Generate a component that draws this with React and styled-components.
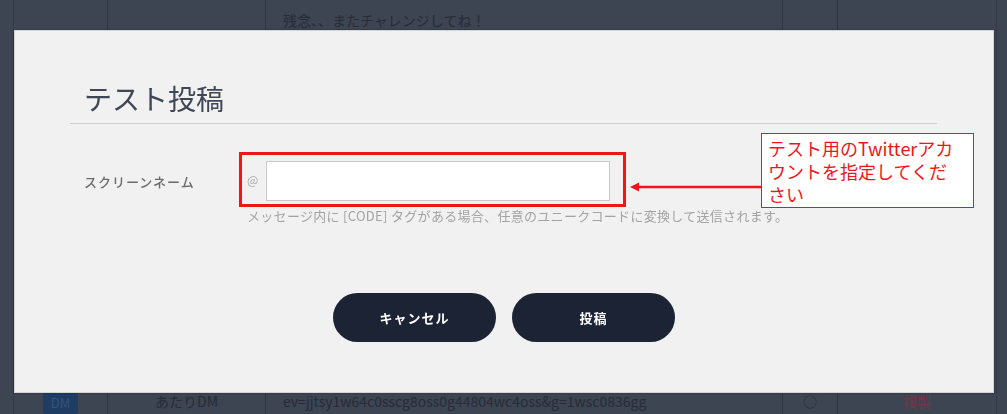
import React from "react";
import styled, { createGlobalStyle } from "styled-components";

const GlobalStyle = createGlobalStyle`
  html, body {
    margin: 0;
    padding: 0;
    background: #3d4452;
    font-family: "Noto Sans CJK JP", "Noto Sans", sans-serif;
    overflow: hidden;
  }
`;

const Page = styled.div`
  width: 1007px;
  height: 414px;
  overflow: hidden;
  background: #3d4452;
`;

const Table = styled.div`
  margin-left: 13px;
  width: 982px;
  border-left: 1px solid #343a46;
  border-right: 1px solid #343a46;
`;

const Row = styled.div`
  display: grid;
  grid-template-columns: 93px 158px 517px 55px 1fr;
  height: ${(p) => p.$h}px;
`;

const Cell = styled.div`
  border-left: ${(p) => (p.$first ? "none" : "1px solid #2f3541")};
  display: flex;
  align-items: ${(p) => p.$align || "center"};
  justify-content: ${(p) => p.$justify || "flex-start"};
  padding: ${(p) => p.$pad || "0"};
  color: #272c37;
  font-size: 14px;
  white-space: nowrap;
  overflow: hidden;
`;

const Badge = styled.span`
  background: #1f3c62;
  color: #34557c;
  font-size: 13px;
  padding: 2px 8px;
  border-radius: 3px;
`;

const CopyLink = styled.span`
  color: #6a3a47;
  font-size: 14px;
`;

const Modal = styled.div`
  position: fixed;
  left: 14px;
  top: 30px;
  width: 980px;
  height: 363px;
  box-sizing: border-box;
  background: #f1f1f1;
  border: 1px solid #d4d4d4;
  box-shadow: 0 0 2px rgba(0, 0, 0, 0.3);
`;

const Header = styled.div`
  margin: 50px 56px 0 55px;
  padding: 0 0 7px 14px;
  border-bottom: 1px solid #cdcdcd;
`;

const Title = styled.h2`
  margin: 0;
  font-size: 28px;
  line-height: 35px;
  font-weight: 400;
  color: #3f4656;
`;

const FormRow = styled.div`
  display: flex;
  align-items: center;
  margin: 37px 0 0 69px;
`;

const Label = styled.div`
  width: 163px;
  font-size: 13px;
  color: #6b6b6b;
  font-weight: 500;
  letter-spacing: 1px;
`;

const FieldGroup = styled.div`
  position: relative;
  display: flex;
  align-items: center;
  gap: 8px;

  &::after {
    content: "";
    position: absolute;
    top: -9px;
    left: -8px;
    right: -16px;
    bottom: -6px;
    border: 3px solid #f0141c;
    pointer-events: none;
  }
`;

const At = styled.span`
  font-size: 12px;
  color: #aaaaaa;
  margin-top: -4px;
`;

const Input = styled.input`
  width: 344px;
  height: 40px;
  box-sizing: border-box;
  border: 1px solid #c9c9c9;
  background: #fff;
  outline: none;
`;

const Help = styled.p`
  margin: 5px 0 0 232px;
  font-size: 13px;
  line-height: 19px;
  color: #a3a3a3;
  letter-spacing: 0.3px;
`;

const Actions = styled.div`
  display: flex;
  justify-content: center;
  gap: 16px;
  margin-top: 68px;
`;

const Button = styled.button`
  width: 163px;
  height: 49px;
  border: none;
  border-radius: 25px;
  background: #1c2334;
  color: #fff;
  font-family: inherit;
  font-size: 13px;
  font-weight: 700;
  letter-spacing: 1px;
`;

const Arrow = styled.svg`
  position: absolute;
  left: 614px;
  top: 150px;
`;

const CalloutFrame = styled.div`
  position: absolute;
  left: 746px;
  top: 102px;
  width: 213px;
  height: 75px;
  box-sizing: border-box;
  padding: 1px;
  background: #ff1010;
`;

const Callout = styled.div`
  height: 100%;
  box-sizing: border-box;
  background: #ffffff;
  padding: 3px 6px;
  color: #f0141c;
  font-size: 18px;
  line-height: 23px;
`;

const CalloutLine = styled.span`
  display: block;
  white-space: nowrap;
`;

export default function App() {
  return (
    <Page>
      <GlobalStyle />
      <Table>
        <Row $h={60}>
          <Cell $first />
          <Cell />
          <Cell $align="flex-start" $pad="10px 0 0 17px">
            残念、、またチャレンジしてね！
          </Cell>
          <Cell />
          <Cell />
        </Row>
        <Row $h={326}>
          <Cell $first />
          <Cell />
          <Cell />
          <Cell />
          <Cell />
        </Row>
        <Row $h={40}>
          <Cell $first $justify="center" $align="flex-start" $pad="5px 0 0 0">
            <Badge>DM</Badge>
          </Cell>
          <Cell $justify="center" $align="flex-start" $pad="5px 0 0 0">
            あたりDM
          </Cell>
          <Cell $align="flex-start" $pad="5px 0 0 17px">
            ev=jjtsy1w64c0sscg8oss0g44804wc4oss&g=1wsc0836gg
          </Cell>
          <Cell $justify="center" $align="flex-start" $pad="5px 0 0 0">
            ○
          </Cell>
          <Cell $justify="center" $align="flex-start" $pad="5px 0 0 0">
            <CopyLink>複製</CopyLink>
          </Cell>
        </Row>
      </Table>

      <Modal>
        <Header>
          <Title>テスト投稿</Title>
        </Header>
        <FormRow>
          <Label>スクリーンネーム</Label>
          <FieldGroup>
            <At>@</At>
            <Input type="text" />
          </FieldGroup>
        </FormRow>
        <Help>
          メッセージ内に [CODE] タグがある場合、任意のユニークコードに変換して送信されます。
        </Help>
        <Actions>
          <Button>キャンセル</Button>
          <Button>投稿</Button>
        </Actions>

        <Arrow width="134" height="12" viewBox="0 0 134 12">
          <line x1="8" y1="6" x2="134" y2="6" stroke="#f0141c" strokeWidth="2.5" />
          <polygon points="1,6 10,1.5 10,10.5" fill="#f0141c" />
        </Arrow>
        <CalloutFrame>
          <Callout>
            <CalloutLine>テスト用のTwitterアカ</CalloutLine>
            <CalloutLine>ウントを指定してくだ</CalloutLine>
            <CalloutLine>さい</CalloutLine>
          </Callout>
        </CalloutFrame>
      </Modal>
    </Page>
  );
}
